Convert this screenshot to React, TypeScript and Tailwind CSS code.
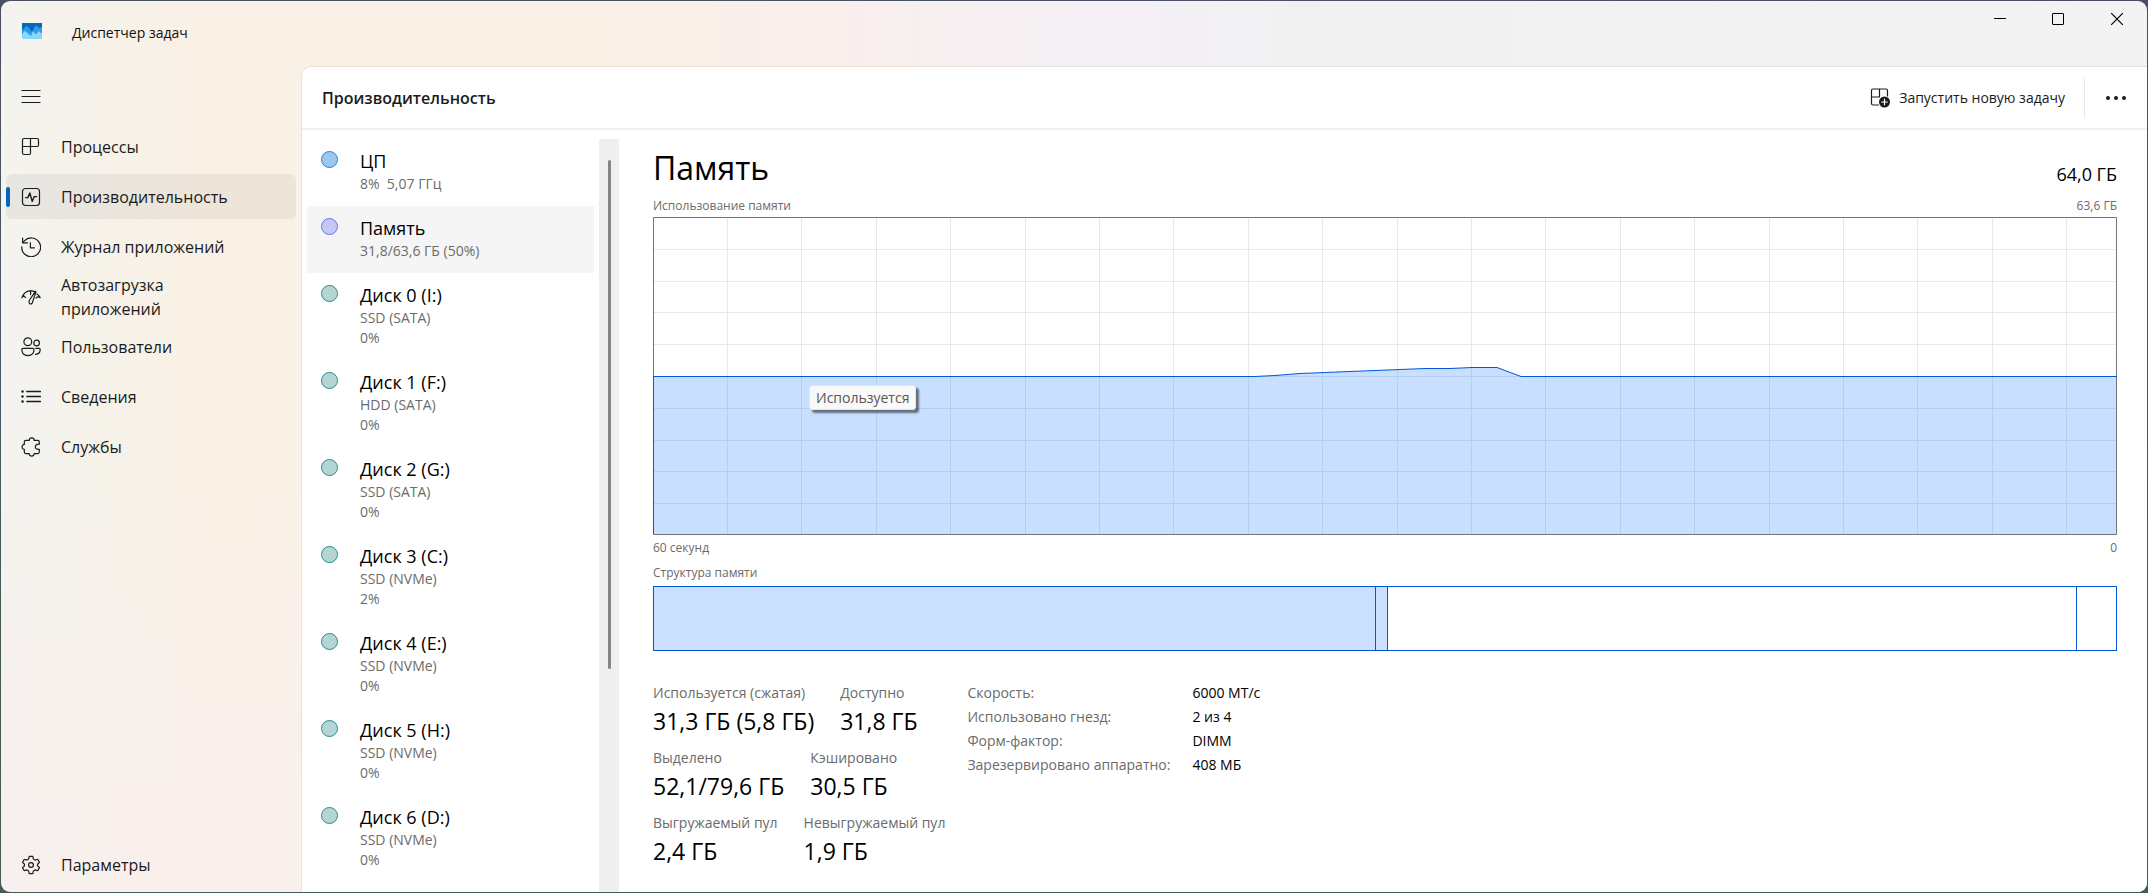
import { ReactNode } from 'react';

type IconProps = { children: ReactNode };

function Icon({ children }: IconProps) {
  return (
    <svg
      viewBox="0 0 20 20"
      className="size-5 shrink-0"
      fill="none"
      stroke="currentColor"
      strokeWidth={1.2}
      strokeLinecap="round"
      strokeLinejoin="round"
      aria-hidden="true"
    >
      {children}
    </svg>
  );
}

const navItems = [
  {
    label: 'Процессы',
    icon: (
      <Icon>
        <path d="M3 1.500h13a1.500 1.500 0 0 1 1.500 1.500v5a1.500 1.500 0 0 1-1.500 1.500H1.500V3A1.500 1.500 0 0 1 3 1.500Z" />
        <path d="M9.500 1.500V16A1.500 1.500 0 0 1 8 17.500H3A1.500 1.500 0 0 1 1.500 16V9.500" />
      </Icon>
    ),
  },
  {
    label: 'Производительность',
    active: true,
    icon: (
      <Icon>
        <rect x="1.500" y="1.500" width="17" height="17" rx="3" />
        <path d="M4.600 10.600h2.200l2-4.600 2.400 8.400 2-4.800h2.400" strokeWidth={1.4} />
      </Icon>
    ),
  },
  {
    label: 'Журнал приложений',
    icon: (
      <Icon>
        <path d="M.8 9.800a9.400 9.400 0 1 0 2.600-6L1.600 5.600" />
        <path d="M1.600 1v4.800h5" />
        <path d="M9.400 5.800v5h4" />
      </Icon>
    ),
  },
  {
    label: 'Автозагрузка приложений',
    icon: (
      <Icon>
        <path d="M1.600 9.200c1.400-3.200 4.600-5.400 8-5.400 1.700 0 3.200.3 4.400 1" />
        <path d="m.8 10.800 1.400-2.600 2.400 2.400" />
        <path d="M14.200 4.600 8.600 13c-1.200 2.200-.4 4 1 4s2-1 2.200-2.600l3-9.200c.2-.9-.3-1.200-.6-.6Z" />
        <path d="M16 7c1.300.9 2.400 2 3.200 3.600l-2.600-.8-1.400 1.200" />
        <path d="M9.600 4v3.600" />
      </Icon>
    ),
  },
  {
    label: 'Пользователи',
    icon: (
      <Icon>
        <circle cx="6.800" cy="4.800" r="3.900" />
        <circle cx="15.600" cy="6" r="2.800" />
        <path d="M2 11.400h9.800a1.200 1.200 0 0 1 1.200 1.200c0 3.800-2.200 6-6.100 6s-6.100-2.200-6.100-6A1.200 1.200 0 0 1 2 11.400Z" />
        <path d="M14.800 11.400h3.200a1.200 1.200 0 0 1 1.200 1.200c0 3-1.600 4.600-4.600 4.800" />
      </Icon>
    ),
  },
  {
    label: 'Сведения',
    icon: (
      <Icon>
        <path d="M5.800 4.500h13.600M5.800 9.500h13.600M5.800 14.500h13.600" strokeWidth={1.4} />
        <path d="M1.500 4.500h.1M1.500 9.500h.1M1.500 14.500h.1" strokeWidth={2.4} />
      </Icon>
    ),
  },
  {
    label: 'Службы',
    icon: (
      <Icon>
        <path d="M4.800 3.400h3.400C8.200 1.800 9.300.9 10.700.9s2.500.9 2.500 2.500h3.600a1.500 1.500 0 0 1 1.500 1.500v2.300c-2.400-.3-4 .9-4 2.600s1.600 2.900 4 2.600v2.700a1.500 1.500 0 0 1-1.500 1.500h-3.600c0 1.600-1.100 2.500-2.500 2.500s-2.500-.9-2.500-2.500H4.800a1.500 1.500 0 0 1-1.500-1.500v-2.700C2 12.400 1.100 11.300 1.100 9.900s.9-2.500 2.200-2.500V4.900a1.500 1.500 0 0 1 1.500-1.500Z" />
      </Icon>
    ),
  },
];

const resources = [
  { name: 'ЦП', lines: ['8%  5,07 ГГц'], dot: 'border-[#2b84d4] bg-[#9ac8ef]' },
  { name: 'Память', lines: ['31,8/63,6 ГБ (50%)'], dot: 'border-[#6478e8] bg-[#c3c9f4]', active: true },
  { name: 'Диск 0 (I:)', lines: ['SSD (SATA)', '0%'], dot: 'border-[#2e8b8a] bg-[#b4d5d5]' },
  { name: 'Диск 1 (F:)', lines: ['HDD (SATA)', '0%'], dot: 'border-[#2e8b8a] bg-[#b4d5d5]' },
  { name: 'Диск 2 (G:)', lines: ['SSD (SATA)', '0%'], dot: 'border-[#2e8b8a] bg-[#b4d5d5]' },
  { name: 'Диск 3 (C:)', lines: ['SSD (NVMe)', '2%'], dot: 'border-[#2e8b8a] bg-[#b4d5d5]' },
  { name: 'Диск 4 (E:)', lines: ['SSD (NVMe)', '0%'], dot: 'border-[#2e8b8a] bg-[#b4d5d5]' },
  { name: 'Диск 5 (H:)', lines: ['SSD (NVMe)', '0%'], dot: 'border-[#2e8b8a] bg-[#b4d5d5]' },
  { name: 'Диск 6 (D:)', lines: ['SSD (NVMe)', '0%'], dot: 'border-[#2e8b8a] bg-[#b4d5d5]' },
];

const stats = [
  [
    { label: 'Используется (сжатая)', value: '31,3 ГБ (5,8 ГБ)' },
    { label: 'Доступно', value: '31,8 ГБ' },
  ],
  [
    { label: 'Выделено', value: '52,1/79,6 ГБ' },
    { label: 'Кэшировано', value: '30,5 ГБ' },
  ],
  [
    { label: 'Выгружаемый пул', value: '2,4 ГБ' },
    { label: 'Невыгружаемый пул', value: '1,9 ГБ' },
  ],
];

const hardware = [
  ['Скорость:', '6000 МТ/с'],
  ['Использовано гнезд:', '2 из 4'],
  ['Форм-фактор:', 'DIMM'],
  ['Зарезервировано аппаратно:', '408 МБ'],
];

// share of the memory map, in percent
const composition = [
  { name: 'Используется', share: 49.35, filled: true },
  { name: 'Изменено', share: 0.8, filled: true },
  { name: 'Зарезервировано', share: 47.15, filled: false },
  { name: 'Свободно', share: 2.7, filled: false },
];

const usage =
  '0,159.5 602,159.5 622,158.5 647,156.5 697,154.5 747,152.5 772,151.5 797,151.5 819,150.5 844,150.5 868,159.5 1464,159.5';

function TitleBar() {
  return (
    <header className="flex h-[65px] items-start">
      <div className="flex flex-1 items-center pt-[20px] pl-[21px]">
        <svg viewBox="0 0 20 16" className="mb-1 h-4 w-5" aria-hidden="true">
          <path d="M0 0h20v16H0Z" fill="#0a64b8" />
          <path d="M0 7 2.500 5l2-2.500L7 5l3 4 2.500-5 2-1.500L17 5l3-1v12H0Z" fill="#2a9de4" />
          <path d="M0 11.500 2.500 8l2 1 2.500 2.500L9 13l2-5 2.500 3.500 2-2L17 8l3 3v5H0Z" fill="#8bd7fc" />
        </svg>
        <h1 className="ml-[30px] text-[14px] leading-6 text-[#111]">Диспетчер задач</h1>
      </div>
      <div className="flex">
        <button aria-label="Свернуть" className="flex h-9 w-[58px] items-center justify-center">
          <svg viewBox="0 0 12 12" className="size-3" stroke="#000" shapeRendering="crispEdges">
            <path d="M0 5.500h12" />
          </svg>
        </button>
        <button aria-label="Развернуть" className="flex h-9 w-[58px] items-center justify-center">
          <svg viewBox="0 0 12 12" className="size-3" stroke="#000" fill="none">
            <rect x=".5" y=".5" width="11" height="11" rx=".5" />
          </svg>
        </button>
        <button aria-label="Закрыть" className="flex h-9 w-[60px] items-center justify-center">
          <svg viewBox="0 0 12 12" className="size-3" stroke="#000" strokeWidth={1.2}>
            <path d="m0 0 12 12M12 0 0 12" />
          </svg>
        </button>
      </div>
    </header>
  );
}

function Sidebar() {
  return (
    <nav className="flex w-[300px] shrink-0 flex-col px-[5px] text-[16px] text-[#1b1b1b]">
      <button aria-label="Меню" className="mt-[8px] mb-[5px] flex h-[45px] w-10 items-center pl-[15px]">
        <Icon>
          <path d="M1 3.500h18M1 9.500h18M1 15.500h18" />
        </Icon>
      </button>
      <div className="flex flex-1 flex-col gap-[5px]">
        {navItems.map((item) => (
          <button
            key={item.label}
            className={`flex h-[45px] items-center rounded-md text-left ${item.active ? 'bg-black/5' : ''}`}
          >
            <span className={`h-5 w-1 rounded-full ${item.active ? 'bg-[#0067c0]' : ''}`} />
            <span className="ml-[11px] flex">{item.icon}</span>
            <span className="ml-5 max-w-[180px] leading-6">{item.label}</span>
          </button>
        ))}
      </div>
      <button className="mb-[5px] flex h-[45px] items-center pl-[15px]">
        <Icon>
          <circle cx="10" cy="10" r="2.400" />
          <path d="M8.200 1.400h3.600l.6 2.700 1.700 1 2.600-.8 1.800 3.100-2 1.900v1.400l2 1.900-1.800 3.100-2.600-.8-1.700 1-.6 2.700H8.200l-.6-2.700-1.700-1-2.600.8-1.800-3.100 2-1.900V9.300l-2-1.900 1.800-3.100 2.600.8 1.700-1Z" />
        </Icon>
        <span className="ml-5">Параметры</span>
      </button>
    </nav>
  );
}

function ResourceList() {
  return (
    <aside className="flex w-[317px] shrink-0 pt-[9px]">
      <ul className="ml-[5px] w-[287px]">
        {resources.map((r) => (
          <li key={r.name}>
            <button className={`flex w-full pt-[10px] pb-3 pl-[14px] text-left ${r.active ? 'bg-[#f5f5f5]' : ''}`}>
              <span className={`mt-[2px] size-[17px] shrink-0 rounded-full border ${r.dot}`} />
              <span className="ml-[22px] flex flex-col">
                <span className="mb-px text-[18px] leading-6 text-black">{r.name}</span>
                {r.lines.map((line) => (
                  <span key={line} className="text-[14px] leading-5 whitespace-pre text-[#6b6b6b]">
                    {line}
                  </span>
                ))}
              </span>
            </button>
          </li>
        ))}
      </ul>
      <div className="ml-[5px] flex w-5 justify-center bg-[#efefef] pt-[21px]">
        <div className="h-[509px] w-[3px] rounded-full bg-[#858585]" />
      </div>
    </aside>
  );
}

function UsageChart() {
  return (
    <div className="relative">
      <svg
        viewBox="0 0 1464 318"
        preserveAspectRatio="none"
        className="block h-[318px] w-full"
        fill="none"
        role="img"
        aria-label="Использование памяти"
      >
        <g stroke="#e8e8e8" shapeRendering="crispEdges">
          {Array.from({ length: 19 }, (_, i) => (
            <path key={i} d={`M${Math.round(74 + i * 74.4) + 0.5} 0v318`} vectorEffect="non-scaling-stroke" />
          ))}
          {Array.from({ length: 9 }, (_, i) => (
            <path key={i} d={`M0 ${Math.round((i + 1) * 31.8) + 0.5}h1464`} vectorEffect="non-scaling-stroke" />
          ))}
        </g>
        <polygon points={`0,318 ${usage} 1464,318`} fill="#0066ff" fillOpacity={0.21} />
        <rect x=".5" y=".5" width="1463" height="317" stroke="#747474" vectorEffect="non-scaling-stroke" />
        <path d="M.5 159v158" stroke="#0057d8" vectorEffect="non-scaling-stroke" />
        <polyline points={usage} stroke="#0057d8" vectorEffect="non-scaling-stroke" />
      </svg>
      <div
        role="tooltip"
        className="absolute top-[168px] left-[156px] rounded-[3px] border border-[#e5e5e5] bg-[#f9f9f9] px-[6px] text-[14px] leading-[23px] text-[#575757] shadow-[3px_3px_2px_rgba(0,0,0,0.5)]"
      >
        Используется
      </div>
    </div>
  );
}

function MemoryPanel() {
  return (
    <section className="min-w-0 flex-1 pt-[14px] pr-[30px] pl-[34px]">
      <div className="flex items-end justify-between text-black">
        <h2 className="text-[32px] leading-12">Память</h2>
        <span className="text-[18px] leading-9">64,0 ГБ</span>
      </div>
      <div className="mt-1 mb-px flex justify-between text-[12px] leading-5 text-[#6b6b6b]">
        <span>Использование памяти</span>
        <span>63,6 ГБ</span>
      </div>
      <UsageChart />
      <div className="mt-[3px] flex justify-between text-[12px] leading-5 text-[#6b6b6b]">
        <span>60 секунд</span>
        <span>0</span>
      </div>
      <div className="mt-[5px] mb-[3px] text-[12px] leading-5 text-[#6b6b6b]">Структура памяти</div>
      <div className="flex h-[65px] border border-r-0 border-[#0057d8]">
        {composition.map((part) => (
          <div
            key={part.name}
            title={part.name}
            className={`border-r border-[#0057d8] ${part.filled ? 'bg-[#cbe0ff]' : 'bg-white'}`}
            style={{ width: `${part.share}%` }}
          />
        ))}
      </div>
      <div className="mt-[30px] flex gap-[22px]">
        <div className="flex flex-col gap-[9px]">
          {stats.map((row) => (
            <dl key={row[0].label} className="flex gap-[26px]">
              {row.map((s) => (
                <div key={s.label}>
                  <dt className="text-[14px] leading-6 text-[#6b6b6b]">{s.label}</dt>
                  <dd className="text-[23px] leading-8 text-black">{s.value}</dd>
                </div>
              ))}
            </dl>
          ))}
        </div>
        <table className="self-start text-left text-[14px] leading-6">
          <tbody>
            {hardware.map(([label, value]) => (
              <tr key={label}>
                <th scope="row" className="pr-[22px] font-normal text-[#6b6b6b]">{label}</th>
                <td className="text-black">{value}</td>
              </tr>
            ))}
          </tbody>
        </table>
      </div>
    </section>
  );
}

function App() {
  return (
    <div className="flex min-h-screen bg-linear-to-b from-[#4a5064] to-[#425c55] p-px font-['Open_Sans','Noto_Sans',sans-serif]">
      <div className="flex flex-1 flex-col overflow-hidden rounded-[9px] bg-[linear-gradient(to_bottom,transparent_55%,rgba(249,239,238,0.7)_90%),linear-gradient(to_right,#f4f3ef,#f6f2e9_5%,#faf1e6_9%,#f9f0e6_28%,#f9efec_38%,#f4f0f6_52%,#f1f1f1_62%,#f3f3f3)]">
        <TitleBar />
        <div className="flex flex-1">
          <Sidebar />
          <main className="flex min-w-0 flex-1 flex-col rounded-tl-[10px] border-t border-l border-[#e9e3d9] bg-white">
            <div className="flex h-[63px] items-center border-b-2 border-[#f0f0f0] pl-5">
              <h2 className="flex-1 pt-px text-[16px] font-semibold text-[#1b1b1b]">Производительность</h2>
              <button className="flex items-center gap-[9px] text-[14px] text-[#1b1b1b]">
                <Icon>
                  <path d="M8.500 17H3a1.500 1.500 0 0 1-1.500-1.500V2.500A1.500 1.500 0 0 1 3 1h13a1.500 1.500 0 0 1 1.500 1.500V8M9.500 1v8M1.500 9h8" />
                  <circle cx="14.500" cy="14" r="5.500" fill="currentColor" stroke="none" />
                  <path d="M14.500 11.200v5.600M11.700 14h5.600" stroke="#fff" />
                </Icon>
                Запустить новую задачу
              </button>
              <span className="ml-[19px] h-10 w-px bg-[#e8e8e8]" />
              <button aria-label="Ещё" className="flex h-10 w-[62px] items-center justify-center">
                <svg viewBox="0 0 20 4" className="h-1 w-5" fill="#1b1b1b">
                  <circle cx="2" cy="2" r="2" />
                  <circle cx="10" cy="2" r="2" />
                  <circle cx="18" cy="2" r="2" />
                </svg>
              </button>
            </div>
            <div className="flex flex-1">
              <ResourceList />
              <MemoryPanel />
            </div>
          </main>
        </div>
      </div>
    </div>
  );
}

export default App;
